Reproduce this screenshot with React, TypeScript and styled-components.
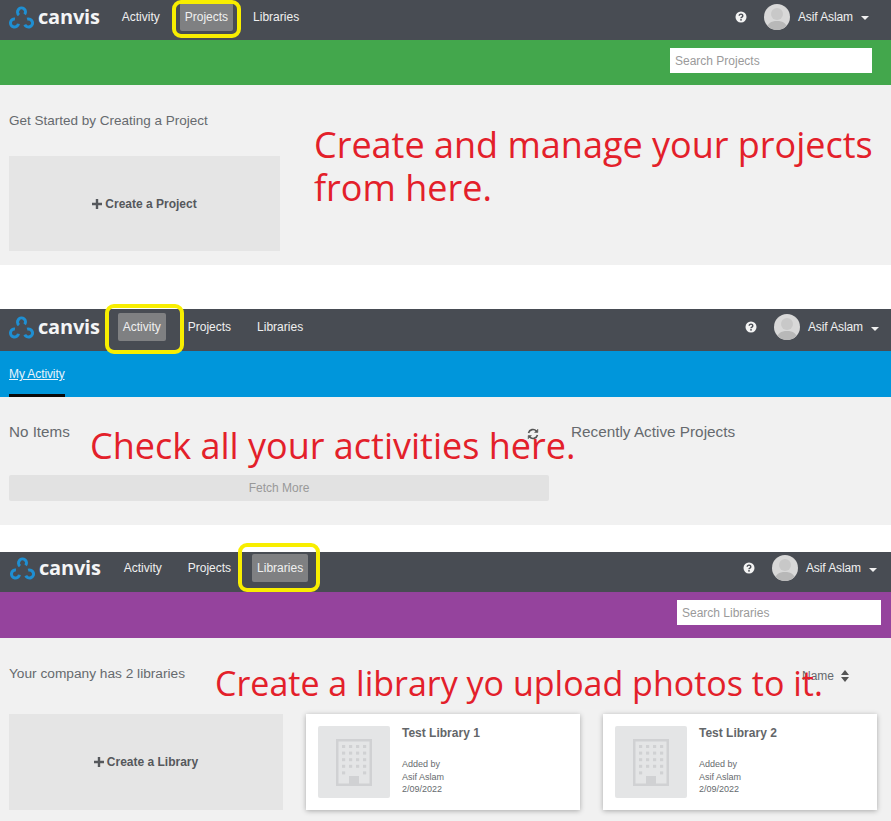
import { createGlobalStyle, styled } from 'styled-components';

const GlobalStyle = createGlobalStyle`
  html, body {
    margin: 0;
    padding: 0;
    background: #fff;
    font-family: 'Liberation Sans', Arial, sans-serif;
  }
`;

const SPage = styled.div`
  width: 891px;
  height: 821px;
  overflow: hidden;
  display: flex;
  flex-direction: column;
`;

const SPanel = styled.section<{ $height: number; $gap: number }>`
  position: relative;
  flex: none;
  height: ${({ $height }) => $height}px;
  margin-bottom: ${({ $gap }) => $gap}px;
  display: flex;
  flex-direction: column;
  background: #f1f1f1;
`;

const SNav = styled.nav<{ $height: number; $pad: number; $right: number; $bottom: number }>`
  flex: none;
  height: ${({ $height }) => $height}px;
  box-sizing: border-box;
  display: flex;
  align-items: center;
  padding: 0 ${({ $right }) => $right}px ${({ $bottom }) => $bottom}px ${({ $pad }) => $pad}px;
  background: #484c53;
  color: #fff;
`;

const SLogo = styled.div<{ $gap: number }>`
  display: flex;
  align-items: center;
  gap: 4px;
  margin-right: ${({ $gap }) => $gap}px;
  font: bold 20px/24px 'Open Sans', sans-serif;
  letter-spacing: -0.2px;
  color: #f4f5f6;
`;

const SNavItem = styled.div<{ $active?: boolean; $gap: number }>`
  flex: none;
  padding: 7px 5px;
  margin-right: ${({ $gap }) => $gap}px;
  font-size: 12px;
  line-height: 14px;
  border-radius: 2px;
  color: #f0f0f0;
  background: ${({ $active }) => ($active ? '#7f8082' : 'transparent')};
`;

const SNavRight = styled.div`
  margin-left: auto;
  display: flex;
  align-items: center;
`;

const SHelp = styled.svg<{ $gap: number }>`
  width: 12px;
  height: 12px;
  margin-right: ${({ $gap }) => $gap}px;
`;

const SAvatar = styled.svg`
  width: 26px;
  height: 26px;
  margin-right: 8px;
  border-radius: 50%;
`;

const SUserName = styled.span`
  font-size: 12px;
  letter-spacing: -0.1px;
  color: #f0f0f0;
`;

const SCaret = styled.span`
  width: 0;
  height: 0;
  margin: 3px 0 0 8px;
  border-style: solid;
  border-width: 4px 4px 0;
  border-color: #f0f0f0 transparent transparent;
`;

const SColorBar = styled.div<{ $color: string; $height: number; $right: number; $bottom: number }>`
  flex: none;
  height: ${({ $height }) => $height}px;
  box-sizing: border-box;
  padding: 0 ${({ $right }) => $right}px ${({ $bottom }) => $bottom}px 0;
  display: flex;
  align-items: center;
  justify-content: flex-end;
  background: ${({ $color }) => $color};
`;

const SSearch = styled.div<{ $width: number }>`
  width: ${({ $width }) => $width}px;
  height: 25px;
  box-sizing: border-box;
  padding-left: 5px;
  display: flex;
  align-items: center;
  background: #fff;
  font-size: 12px;
  color: #9a9a9a;
`;

const STabBar = styled.div`
  flex: none;
  height: 46px;
  padding-left: 9px;
  display: flex;
  background: #0096db;
`;

const STab = styled.div`
  height: 46px;
  box-sizing: border-box;
  padding-top: 16px;
  border-bottom: 3px solid #0a0a0a;
  font-size: 12px;
  line-height: 14px;
  letter-spacing: -0.1px;
  color: #e8f4fb;
  text-decoration: underline;
`;

const SBody = styled.div<{ $top: number; $left: number }>`
  flex: 1;
  min-height: 0;
  padding: ${({ $top }) => $top}px 0 0 ${({ $left }) => $left}px;
  display: flex;
  flex-direction: column;
`;

const SHeading = styled.div<{ $size: number }>`
  font-size: ${({ $size }) => $size}px;
  line-height: 18px;
  color: #666a6e;
`;

const SCreateBox = styled.div<{ $width: number; $height: number; $top: number }>`
  flex: none;
  width: ${({ $width }) => $width}px;
  height: ${({ $height }) => $height}px;
  margin-top: ${({ $top }) => $top}px;
  display: flex;
  align-items: center;
  justify-content: center;
  gap: 3px;
  background: #e5e5e5;
  font-size: 12px;
  font-weight: bold;
  color: #55585c;
`;

const SActivityRow = styled.div`
  display: grid;
  grid-template-columns: 518px 44px 1fr;
  align-items: start;
`;

const SFetchMore = styled.div`
  width: 540px;
  height: 26px;
  margin-top: 34px;
  display: flex;
  align-items: center;
  justify-content: center;
  border-radius: 2px;
  background: #e2e2e2;
  font-size: 12px;
  color: #999;
`;

const SRefresh = styled.svg`
  width: 12px;
  height: 12px;
  margin-top: 5px;
`;

const SLibHeader = styled.div`
  display: flex;
  justify-content: space-between;
  align-items: flex-start;
  height: 18px;
  padding-right: 42px;
`;

const SSort = styled.div`
  margin-top: 2px;
  display: flex;
  align-items: center;
  gap: 7px;
  font-size: 12px;
  line-height: 18px;
  color: #666a6e;
`;

const SLibRow = styled.div`
  margin-top: 31px;
  display: flex;
  align-items: flex-start;
`;

const SCard = styled.div<{ $gap: number }>`
  flex: none;
  width: 274px;
  height: 96px;
  margin-left: ${({ $gap }) => $gap}px;
  box-sizing: border-box;
  padding: 12px;
  display: flex;
  gap: 12px;
  background: #fff;
  box-shadow: 0 1px 5px rgba(0, 0, 0, 0.3);
`;

const SThumb = styled.div`
  flex: none;
  width: 72px;
  height: 72px;
  display: flex;
  align-items: center;
  justify-content: center;
  border-radius: 2px;
  background: #e4e5e6;
`;

const SCardTitle = styled.div`
  height: 25px;
  font-size: 12px;
  line-height: 14px;
  font-weight: bold;
  color: #636669;
`;

const SCardMeta = styled.div`
  margin-top: 7px;
  font-size: 9px;
  line-height: 12.5px;
  color: #666a6e;
`;

const SNote = styled.div<{ $top: number; $left: number; $size: number }>`
  position: absolute;
  top: ${({ $top }) => $top}px;
  left: ${({ $left }) => $left}px;
  font-family: 'Open Sans', 'Noto Sans', sans-serif;
  font-size: ${({ $size }) => $size}px;
  line-height: 43px;
  color: #e3202a;
  white-space: nowrap;
`;

const SHighlight = styled.div<{ $top: number; $left: number; $width: number; $height: number }>`
  position: absolute;
  top: ${({ $top }) => $top}px;
  left: ${({ $left }) => $left}px;
  width: ${({ $width }) => $width}px;
  height: ${({ $height }) => $height}px;
  box-sizing: border-box;
  border: 4px solid #f8ee00;
  border-radius: 9px;
`;

const logoRings = [
  { cx: 12.5, cy: 7, turn: 130 },
  { cx: 5.5, cy: 18, turn: 10 },
  { cx: 19.5, cy: 18, turn: -110 },
];

const LogoMark = () => (
  <svg width="25" height="24" viewBox="0 0 25 24" fill="none" stroke="#1f8fd2" strokeWidth="3">
    {logoRings.map(({ cx, cy, turn }) => (
      <circle
        key={turn}
        cx={cx}
        cy={cy}
        r="4"
        pathLength={100}
        strokeDasharray="74 26"
        transform={`rotate(${turn} ${cx} ${cy})`}
      />
    ))}
  </svg>
);

const Logo = ({ gap }: { gap: number }) => (
  <SLogo $gap={gap}>
    <LogoMark />
    canvis
  </SLogo>
);

const HelpIcon = ({ gap }: { gap: number }) => (
  <SHelp $gap={gap} viewBox="0 0 12 12">
    <circle cx="6" cy="6" r="5.5" fill="#f4f4f4" />
    <path d="M4.2 4.7a1.8 1.6 0 1 1 2.7 1.4c-.6.4-.9.6-.9 1.2" fill="none" stroke="#484c53" strokeWidth="1.4" />
    <rect x="5.2" y="8.1" width="1.6" height="1.5" fill="#484c53" />
  </SHelp>
);

const Avatar = () => (
  <SAvatar viewBox="0 0 26 26">
    <rect width="26" height="26" fill="#d8d8d8" />
    <circle cx="13" cy="10" r="6" fill="#c8c8c8" />
    <path d="M3 26c0-7 4-9 10-9s10 2 10 9z" fill="#b8b8b8" />
  </SAvatar>
);

const UserMenu = ({ helpGap }: { helpGap: number }) => (
  <SNavRight>
    <HelpIcon gap={helpGap} />
    <Avatar />
    <SUserName>Asif Aslam</SUserName>
    <SCaret />
  </SNavRight>
);

const PlusIcon = () => (
  <svg width="10" height="10" viewBox="0 0 10 10" fill="#55585c">
    <path d="M3.8 0h2.4v3.8H10v2.4H6.2V10H3.8V6.2H0V3.8h3.8z" />
  </svg>
);

const windowCells = [0, 1, 2, 3, 4].flatMap((row) =>
  [0, 1, 2, 3].filter((col) => row < 4 || col === 0 || col === 3).map((col) => ({ row, col })),
);

const BuildingIcon = () => (
  <svg width="36" height="47" viewBox="0 0 36 47">
    <rect x="1.25" y="1.25" width="33.5" height="44.5" fill="none" stroke="#d0d1d3" strokeWidth="2.5" />
    {windowCells.map(({ row, col }) => (
      <rect key={`${row}-${col}`} x={6 + col * 7} y={6 + row * 6.6} width="3.2" height="3" fill="#d0d1d3" />
    ))}
    <rect x="13" y="37" width="10" height="9" fill="#d0d1d3" />
  </svg>
);

const RefreshIcon = () => (
  <SRefresh viewBox="0 0 12 12" fill="none" stroke="#555" strokeWidth="1.6">
    <path d="M1.5 5a4.6 4.6 0 0 1 8-1.8" />
    <path d="M10.5 7a4.6 4.6 0 0 1-8 1.8" />
    <path d="M10.8 1v3.4H7.4M1.2 11V7.6h3.4" fill="#555" strokeWidth="0.6" />
  </SRefresh>
);

const SortIcon = () => (
  <svg width="8" height="12" viewBox="0 0 8 12" fill="#555">
    <path d="M4 0l4 5H0zM4 12L0 7h8z" />
  </svg>
);

const LibraryCard = ({ title, gap }: { title: string; gap: number }) => (
  <SCard $gap={gap}>
    <SThumb>
      <BuildingIcon />
    </SThumb>
    <div>
      <SCardTitle>{title}</SCardTitle>
      <SCardMeta>
        Added by
        <br />
        Asif Aslam
        <br />
        2/09/2022
      </SCardMeta>
    </div>
  </SCard>
);

const App = () => (
  <SPage>
    <GlobalStyle />

    <SPanel $height={265} $gap={44}>
      <SNav $height={40} $pad={9} $right={22} $bottom={7}>
        <Logo gap={17} />
        <SNavItem $gap={15}>Activity</SNavItem>
        <SNavItem $active $gap={15}>Projects</SNavItem>
        <SNavItem $gap={0}>Libraries</SNavItem>
        <UserMenu helpGap={17} />
      </SNav>
      <SColorBar $color="#43a74c" $height={45} $right={19} $bottom={4}>
        <SSearch $width={202}>Search Projects</SSearch>
      </SColorBar>
      <SBody $top={27} $left={9}>
        <SHeading $size={13.5}>Get Started by Creating a Project</SHeading>
        <SCreateBox $width={271} $height={95} $top={26}>
          <PlusIcon />
          Create a Project
        </SCreateBox>
      </SBody>
      <SHighlight $top={0} $left={172} $width={69} $height={38} />
      <SNote $top={123} $left={314} $size={36}>
        Create and manage your projects
        <br />
        from here.
      </SNote>
    </SPanel>

    <SPanel $height={216} $gap={27}>
      <SNav $height={42} $pad={9} $right={12} $bottom={6}>
        <Logo gap={18} />
        <SNavItem $active $gap={17}>Activity</SNavItem>
        <SNavItem $gap={16}>Projects</SNavItem>
        <SNavItem $gap={0}>Libraries</SNavItem>
        <UserMenu helpGap={17} />
      </SNav>
      <STabBar>
        <STab>My Activity</STab>
      </STabBar>
      <SBody $top={26} $left={9}>
        <SActivityRow>
          <SHeading $size={15.2}>No Items</SHeading>
          <RefreshIcon />
          <SHeading $size={15.3}>Recently Active Projects</SHeading>
        </SActivityRow>
        <SFetchMore>Fetch More</SFetchMore>
      </SBody>
      <SHighlight $top={-5} $left={105} $width={79} $height={50} />
      <SNote $top={115} $left={90} $size={36}>
        Check all your activities here.
      </SNote>
    </SPanel>

    <SPanel $height={269} $gap={0}>
      <SNav $height={40} $pad={10} $right={14} $bottom={8}>
        <Logo gap={18} />
        <SNavItem $gap={16}>Activity</SNavItem>
        <SNavItem $gap={16}>Projects</SNavItem>
        <SNavItem $active $gap={0}>Libraries</SNavItem>
        <UserMenu helpGap={17} />
      </SNav>
      <SColorBar $color="#95439d" $height={46} $right={10} $bottom={5}>
        <SSearch $width={204}>Search Libraries</SSearch>
      </SColorBar>
      <SBody $top={27} $left={9}>
        <SLibHeader>
          <SHeading $size={13.7}>Your company has 2 libraries</SHeading>
          <SSort>
            Name <SortIcon />
          </SSort>
        </SLibHeader>
        <SLibRow>
          <SCreateBox $width={274} $height={96} $top={0}>
            <PlusIcon />
            Create a Library
          </SCreateBox>
          <LibraryCard title="Test Library 1" gap={23} />
          <LibraryCard title="Test Library 2" gap={23} />
        </SLibRow>
      </SBody>
      <SHighlight $top={-9} $left={238} $width={82} $height={49} />
      <SNote $top={110} $left={215} $size={34}>
        Create a library yo upload photos to it.
      </SNote>
    </SPanel>
  </SPage>
);

export default App;
